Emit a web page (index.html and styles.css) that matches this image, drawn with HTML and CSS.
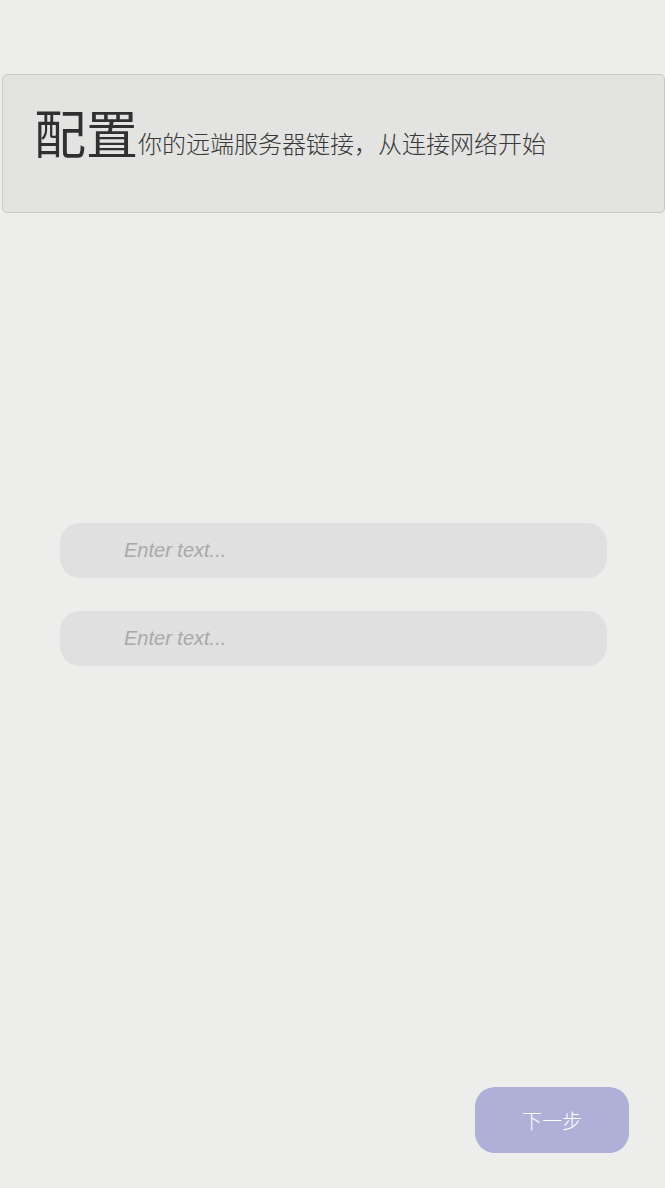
FILE: index.html
```html
<!DOCTYPE html>
<html lang="zh">
<head>
<meta charset="utf-8">
<link rel="stylesheet" href="styles.css">
</head>
<body>
<div class="page">
  <header class="card">
    <span class="big">配置</span><span class="small">你的远端服务器链接，从连接网络开始</span>
  </header>
  <main class="form">
    <input class="field" type="text" placeholder="Enter text...">
    <input class="field" type="text" placeholder="Enter text...">
  </main>
  <footer class="actions">
    <button class="next">下一步</button>
  </footer>
</div>
</body>
</html>
```
FILE: styles.css
```css
html, body {
  margin: 0;
  padding: 0;
  background: #ededeb;
}
.page {
  display: flex;
  flex-direction: column;
  min-height: 1188px;
  box-sizing: border-box;
  font-family: "Noto Sans CJK SC", "Noto Sans", sans-serif;
}
.card {
  margin: 74px 0 0 2px;
  height: 139px;
  box-sizing: border-box;
  border: 1px solid #c9c9c8;
  border-radius: 5px;
  background: #e3e3e2;
  display: flex;
  align-items: baseline;
  padding: 21px 0 0 31px;
  color: #333;
}
.big {
  font-size: 52px;
  line-height: 72px;
  font-weight: 400;
  color: #303030;
}
.small {
  font-size: 24px;
  font-weight: 300;
  color: #383838;
  position: relative;
  top: -1px;
}
.form {
  display: flex;
  flex-direction: column;
  gap: 33px;
  padding: 310px 58px 0 60px;
}
.field {
  height: 55px;
  border: none;
  border-radius: 20px;
  background: #e0e0e0;
  padding: 0 0 0 64px;
  font-family: "Liberation Sans", Arial, sans-serif;
  font-style: italic;
  font-size: 20px;
  color: #555;
  outline: none;
}
.field::placeholder {
  color: #a9a9a9;
}
.actions {
  margin-top: auto;
  display: flex;
  justify-content: flex-end;
  padding: 0 36px 35px 0;
}
.next {
  width: 154px;
  height: 66px;
  border: none;
  border-radius: 20px;
  background: #aeb0d7;
  color: #fff;
  font-family: "Noto Sans CJK SC", sans-serif;
  font-size: 20px;
  font-weight: 300;
}
```
